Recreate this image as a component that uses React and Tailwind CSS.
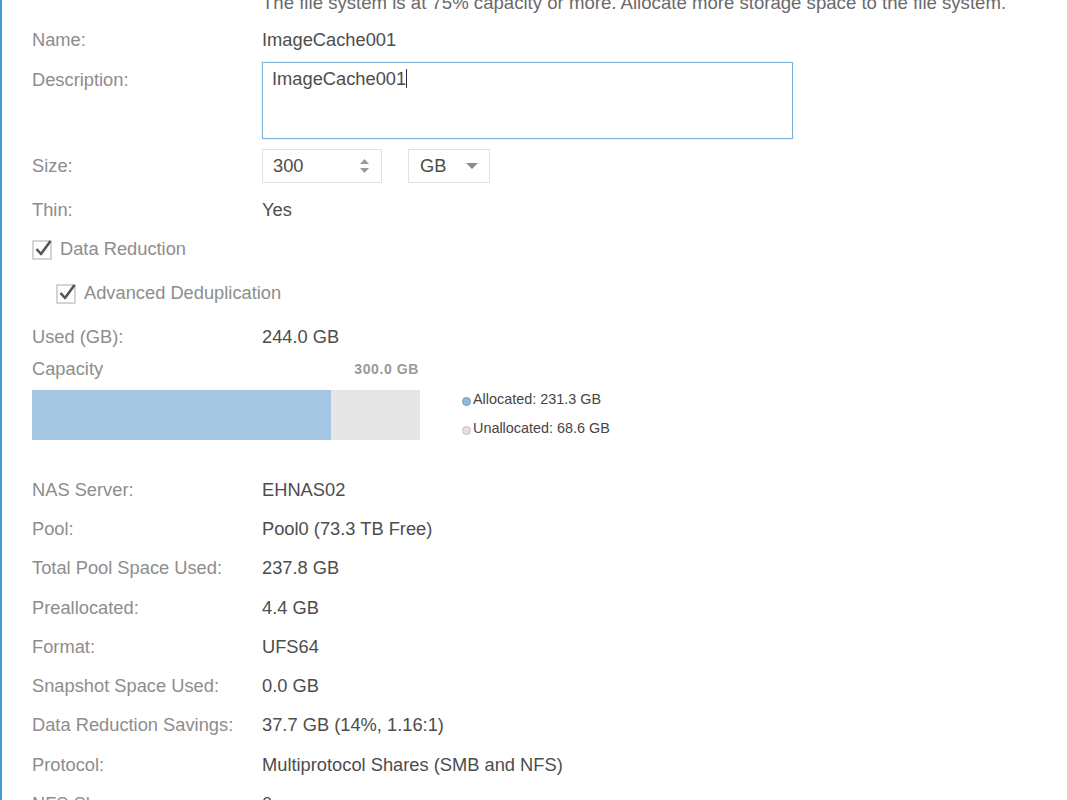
import React from "react";

const labelCls = "w-[230px] shrink-0 text-[#8d8d8d]";
const valueCls = "text-[#4d4d4d]";

const details = [
  ["NAS Server:", "EHNAS02"],
  ["Pool:", "Pool0 (73.3 TB Free)"],
  ["Total Pool Space Used:", "237.8 GB"],
  ["Preallocated:", "4.4 GB"],
  ["Format:", "UFS64"],
  ["Snapshot Space Used:", "0.0 GB"],
  ["Data Reduction Savings:", "37.7 GB (14%, 1.16:1)"],
  ["Protocol:", "Multiprotocol Shares (SMB and NFS)"],
  ["NFS Shares:", "0"],
];

function Check() {
  return (
    <svg width="22" height="22" viewBox="0 0 22 22" className="shrink-0">
      <rect x="1" y="3" width="18" height="18" fill="white" stroke="#c2c2c2" strokeWidth="1.4" />
      <path d="M4.5 11 L9 16 L18.5 3" fill="none" stroke="#555" strokeWidth="2.6" strokeLinejoin="round" />
    </svg>
  );
}

function Row({ label, children, h = "h-[38px]", extra = "" }) {
  return (
    <div className={`flex items-center ${h} ${extra}`}>
      <div className={labelCls}>{label}</div>
      <div className={valueCls}>{children}</div>
    </div>
  );
}

export default function App() {
  return (
    <div
      className="w-[1067px] h-[800px] overflow-hidden bg-white border-l-2 border-[#3d9bd6] pl-[30px] text-[18.3px] leading-[20px]"
      style={{ fontFamily: '"Liberation Sans", Arial, sans-serif' }}
    >
      <div className="mt-[-7px] h-[20px] pl-[230px] text-[18.6px] text-[#6a6a6a] whitespace-nowrap">
        The file system is at 75% capacity or more. Allocate more storage space to the file system.
      </div>

      <Row label="Name:" extra="mt-[8px]">ImageCache001</Row>

      <div className="flex mt-[3px]">
        <div className={`${labelCls} pt-[8px]`}>Description:</div>
        <div className="w-[531px] h-[77px] border-[1.5px] border-[#7eb1d8] shadow-[0_0_2px_#cfe6f5] px-[9px] pt-[6px] text-[#4d4d4d]">
          ImageCache001<span className="inline-block w-px h-[19px] bg-[#333] align-[-3px]" />
        </div>
      </div>

      <div className="flex items-center mt-[10px] h-[34px]">
        <div className={labelCls}>Size:</div>
        <div className="flex items-center gap-[26px]">
          <div className="w-[120px] h-[34px] border border-[#e0e0e0] flex items-center justify-between pl-[10px] pr-[11px] text-[#4d4d4d]">
            <span>300</span>
            <svg width="11" height="16" viewBox="0 0 11 16">
              <path d="M1 6 L5.5 1 L10 6 Z" fill="#9a9a9a" />
              <path d="M1 10 L5.5 15 L10 10 Z" fill="#9a9a9a" />
            </svg>
          </div>
          <div className="w-[82px] h-[34px] border border-[#e0e0e0] flex items-center justify-between pl-[11px] pr-[11px] text-[#4d4d4d]">
            <span>GB</span>
            <svg width="12" height="7" viewBox="0 0 12 7">
              <path d="M0 0 L12 0 L6 6 Z" fill="#8a8a8a" />
            </svg>
          </div>
        </div>
      </div>

      <Row label="Thin:" h="h-[40px]" extra="mt-[7px]">Yes</Row>

      <div className="flex items-center h-[38px] gap-[6px] text-[#8d8d8d]">
        <Check />
        <span>Data Reduction</span>
      </div>

      <div className="flex items-center h-[42px] mt-[4px] pl-[24px] gap-[6px] text-[#8d8d8d]">
        <Check />
        <span>Advanced Deduplication</span>
      </div>

      <Row label="Used (GB):" h="h-[46px]">244.0 GB</Row>

      <div className="w-[388px] h-[18px] flex items-center justify-between">
        <span className="text-[#8d8d8d]">Capacity</span>
        <span className="text-[14px] font-bold text-[#999] tracking-[0.6px] pr-[1px]">300.0 GB</span>
      </div>

      <div className="flex mt-[12px] h-[50px]">
        <div className="w-[388px] h-[50px] bg-[#e6e6e6] flex">
          <div className="w-[299px] h-full bg-[#a4c6e2]" />
        </div>
        <div className="ml-[42px] flex flex-col text-[14.4px] leading-[16px] text-[#454545]">
          <div className="flex items-center gap-[2px] mt-[1px] h-[16px]">
            <span className="w-[9px] h-[9px] rounded-full bg-[#8fb9d6] border border-[#6d9fc2] mt-[5px]" />
            <span>Allocated: 231.3 GB</span>
          </div>
          <div className="flex items-center gap-[2px] mt-[13px] h-[16px]">
            <span className="w-[9px] h-[9px] rounded-full bg-[#e2e2e2] border border-[#c0c0c0] mt-[5px]" />
            <span>Unallocated: 68.6 GB</span>
          </div>
        </div>
      </div>

      <div className="mt-[30px]">
        {details.map(([l, v]) => (
          <Row key={l} label={l} h="h-[39.3px]">
            {v}
          </Row>
        ))}
      </div>
    </div>
  );
}
